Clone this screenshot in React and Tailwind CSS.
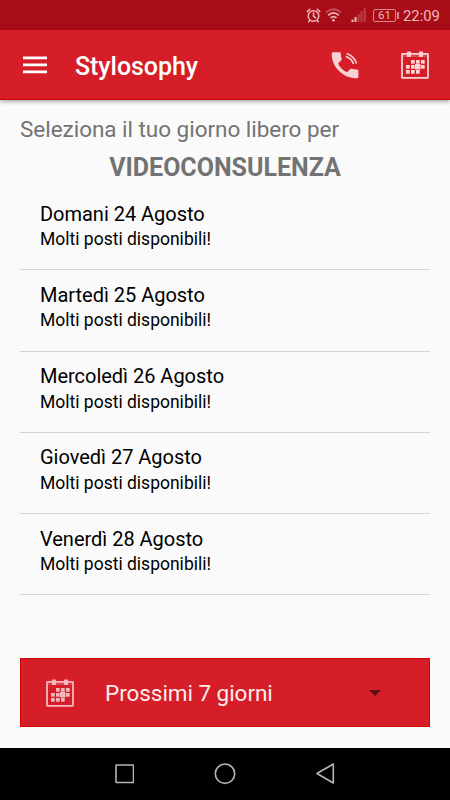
import React from "react";

const days = [
  { label: "Domani 24 Agosto" },
  { label: "Martedì 25 Agosto" },
  { label: "Mercoledì 26 Agosto" },
  { label: "Giovedì 27 Agosto" },
  { label: "Venerdì 28 Agosto" },
];

const CalendarIcon = ({ className }) => (
  <svg width="28" height="28" viewBox="0 0 28 28" className={className}>
    <rect x="1" y="2.8" width="26" height="24" rx="0.5" fill="none" stroke="currentColor" strokeWidth="1.8" />
    <g fill="currentColor">
      <rect x="1" y="4.5" width="26" height="1" opacity="0.5" />
      <rect x="6" y="0.5" width="4" height="5.5" rx="0.5" />
      <rect x="18" y="0.5" width="4" height="5.5" rx="0.5" />
      <rect x="10" y="9" width="3.7" height="3.7" />
      <rect x="15" y="9" width="3.7" height="3.7" />
      <rect x="20" y="9" width="3.7" height="3.7" />
      <rect x="5" y="14" width="3.7" height="3.7" />
      <rect x="10" y="14" width="3.7" height="3.7" />
      <rect x="14" y="13" width="5.5" height="5.5" />
      <rect x="20" y="14" width="3.7" height="3.7" />
      <rect x="5" y="19" width="3.7" height="3.7" />
      <rect x="10" y="19" width="3.7" height="3.7" />
      <rect x="15" y="19" width="3.7" height="3.7" />
    </g>
  </svg>
);

const StatusBar = () => (
  <div className="h-[30px] bg-[#a80c17] text-[#eab9bc] flex items-center shrink-0 pl-[306px]">
    {/* Alarm */}
    <svg width="15" height="15" viewBox="0 0 15 15" fill="none" stroke="currentColor" strokeWidth="1.5" strokeLinecap="round">
      <circle cx="7.5" cy="8" r="5.3" />
      <path d="M7.5 5v3.2l2 1.6M1.2 3.6L3.8 1.2M13.8 3.6L11.2 1.2M3.5 12.5L2.7 13.8M11.5 12.5l.8 1.3" />
    </svg>
    {/* Wifi */}
    <svg width="17" height="14" viewBox="0 0 17 14" fill="none" stroke="currentColor" strokeWidth="1.7" className="ml-[4px]">
      <path d="M1 4.5Q8.5-2 16 4.5" opacity="0.4" />
      <path d="M3.2 7.3Q8.5 2.5 13.8 7.3" />
      <path d="M5.5 9.9Q8.5 7.3 11.5 9.9" />
      <circle cx="8.5" cy="12.3" r="1.3" fill="currentColor" stroke="none" />
    </svg>
    {/* Signal */}
    <svg width="16" height="14" viewBox="0 0 16 14" fill="currentColor" className="ml-[9px]">
      <rect x="0.5" y="11.5" width="2" height="2.5" />
      <rect x="3.5" y="9" width="2" height="5" />
      <g opacity="0.3">
        <rect x="6.5" y="6" width="2" height="8" />
        <rect x="9.5" y="3" width="2" height="11" />
        <rect x="12.7" y="0" width="2" height="14" />
      </g>
    </svg>
    <div className="flex items-center ml-[6px]">
      <div className="w-[23px] h-[13px] pt-px border border-[#d28a90] rounded-[2px] flex items-center justify-center text-[11.5px] leading-none">61</div>
      <div className="w-[2px] h-[7px] ml-px bg-[#d28a90]" />
    </div>
    <span className="ml-[4px] mt-[2px] text-[14.8px] leading-none">22:09</span>
  </div>
);

const Header = () => (
  <header className="relative h-[70px] bg-[#d51e28] border-b border-[#cb0007] shadow-[0_2px_4px_rgba(0,0,0,0.3)] flex items-center shrink-0 pl-[23px] pr-[21px]">
    <svg width="24" height="18" viewBox="0 0 24 18" fill="white">
      <path d="M0 .5h24v2.7H0zM0 7.5h24v2.7H0zM0 14.5h24v2.7H0z" />
    </svg>
    <h1 className="ml-[28px] mt-[4px] text-[25px] tracking-[-0.05px] font-medium text-white flex-1">Stylosophy</h1>
    <svg width="28" height="28" viewBox="0 0 28 28" className="text-[#f9d2d4] mr-[42px]">
      <path
        fill="currentColor"
        d="M2.2 1.3h6.3c.8 0 1.3.6 1.3 1.3 0 1.9.3 3.7.8 5.2.2.5 0 1-.3 1.4L7.1 12.4c2.2 4.4 4.7 6.7 9 8.9l3.2-3.2c.4-.4.9-.5 1.4-.3 1.6.5 3.4.8 5.3.8.8 0 1.4.6 1.4 1.4V26c0 .8-.6 1.3-1.4 1.3C12.5 27.3.7 16.7.7 2.7c0-.8.6-1.4 1.5-1.4z"
      />
      <path d="M14.8 5.6q6 2 7.8 7.5M15.5 2.5q7.8 2.8 10 10" fill="none" stroke="currentColor" strokeWidth="1.6" />
    </svg>
    <CalendarIcon className="text-[#f9d2d4]" />
  </header>
);

const DayRow = ({ label }) => (
  <li className="h-[81.25px] border-b border-[#d4d4d4] pl-5 pt-[12.5px] text-black">
    <p className="text-[20px] leading-[24px] tracking-[-0.02px]">{label}</p>
    <p className="text-[17.5px] leading-[21px] mt-[3.5px]">Molti posti disponibili!</p>
  </li>
);

const NavBar = () => (
  <nav className="h-[52px] bg-black shrink-0 flex justify-center items-center gap-[80px] text-[#b5b5b5]">
    <svg width="20" height="20" viewBox="0 0 20 20" fill="none" stroke="currentColor" strokeWidth="1.6">
      <rect x="2" y="1" width="17.5" height="17.5" rx="0.5" />
    </svg>
    <svg width="22" height="22" viewBox="0 0 22 22" fill="none" stroke="currentColor" strokeWidth="1.6">
      <circle cx="11" cy="10.7" r="9.7" />
    </svg>
    <svg width="20" height="22" viewBox="0 0 20 22" fill="none" stroke="currentColor" strokeWidth="1.6" strokeLinejoin="round">
      <path d="M17.3 1v19L1 10.5z" />
    </svg>
  </nav>
);

function App() {
  return (
    <div className="w-[450px] h-[800px] bg-[#fafafa] flex flex-col overflow-hidden font-[Roboto,sans-serif]">
      <StatusBar />
      <Header />

      <main className="flex-1 px-5 flex flex-col">
        <h2 className="mt-[14px] text-[22.5px] leading-[30px] tracking-[-0.03px] text-[#737373]">
          Seleziona il tuo giorno libero per
        </h2>
        <p className="mt-[9px] text-[25px] leading-[30px] font-bold text-center text-[#737373]">
          VIDEOCONSULENZA
        </p>

        <ul className="mt-[6px]">
          {days.map((day) => (
            <DayRow key={day.label} label={day.label} />
          ))}
        </ul>

        {/* Selettore periodo */}
        <button className="mt-auto mb-[21px] h-[69px] bg-[#d51e28] border border-[#d00308] flex items-center pl-[25px] pr-[48px] text-left">
          <CalendarIcon className="text-[#f4b8bc]" />
          <span className="ml-[31px] mt-[2px] flex-1 text-[22.5px] tracking-[-0.05px] text-[#fdeced]">Prossimi 7 giorni</span>
          <svg width="12" height="6" viewBox="0 0 12 6" fill="#600e12">
            <path d="M0 0h12L6 6z" />
          </svg>
        </button>
      </main>

      <NavBar />
    </div>
  );
}

export default App;
